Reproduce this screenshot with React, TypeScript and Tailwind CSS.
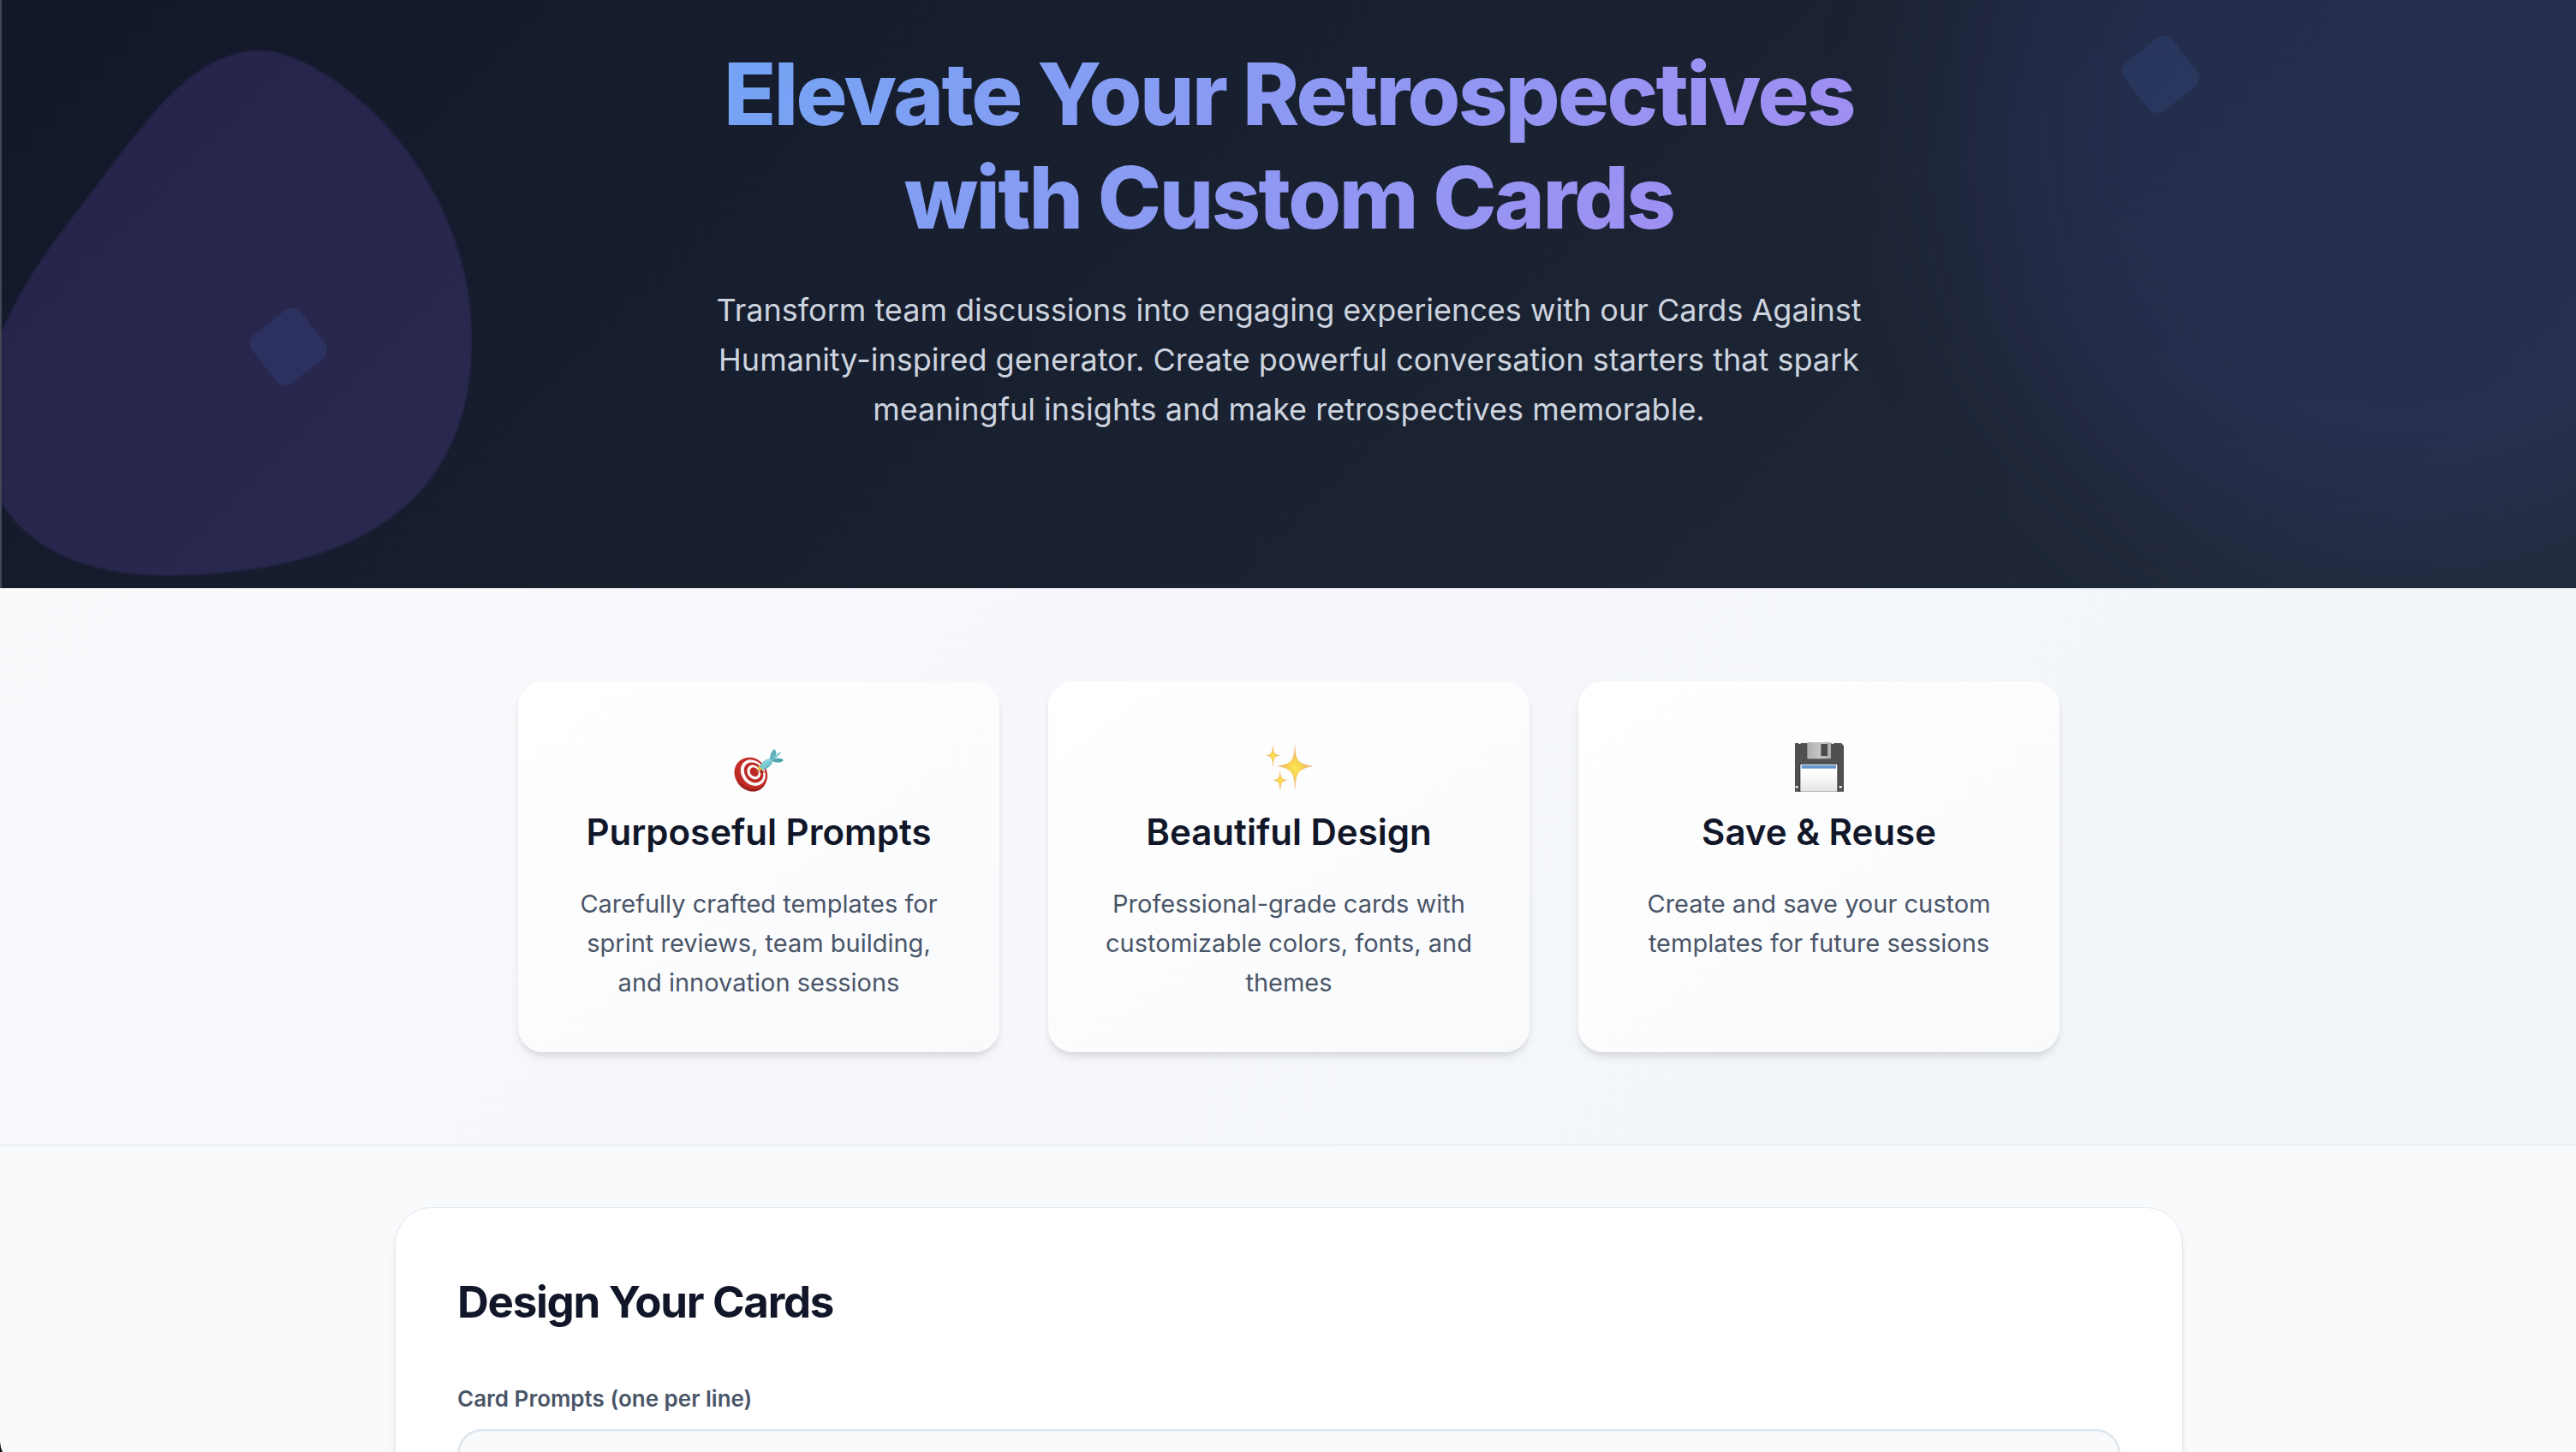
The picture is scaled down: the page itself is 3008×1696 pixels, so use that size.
import type { ReactNode } from "react";

function TargetIcon() {
  return (
    <svg viewBox="78 48 180 180" className="size-[60px]" aria-hidden="true">
      <defs>
        <linearGradient id="rim" x1="0" y1="0" x2="0" y2="1">
          <stop offset="0" stopColor="#c8332a" />
          <stop offset="1" stopColor="#8f1715" />
        </linearGradient>
        <linearGradient id="flight" x1="0" y1="0" x2="1" y2="1">
          <stop offset="0" stopColor="#4f9fac" />
          <stop offset="0.5" stopColor="#7ecfd8" />
          <stop offset="1" stopColor="#3c93a0" />
        </linearGradient>
      </defs>
      <ellipse cx="139" cy="165" rx="53" ry="62" transform="rotate(-38 139 165)" fill="url(#rim)" />
      <ellipse cx="145" cy="160" rx="50" ry="59" transform="rotate(-38 145 160)" fill="#c22a25" />
      <ellipse cx="148" cy="158" rx="40" ry="49" transform="rotate(-38 148 158)" fill="#fbf7f6" />
      <ellipse cx="150" cy="157" rx="31" ry="38" transform="rotate(-38 150 157)" fill="#bb2823" />
      <ellipse cx="151" cy="156" rx="22" ry="27" transform="rotate(-38 151 156)" fill="#fbf7f6" />
      <ellipse cx="152" cy="155" rx="14" ry="17" transform="rotate(-38 152 155)" fill="#bb2823" />
      <path d="M166 152 L184 150 L190 158 L176 160 Z" fill="#8f1715" opacity="0.6" />
      <path d="M152 157 L172 141 L175 145 Z" fill="#b78a2b" />
      <path d="M165 148 L168 131 L186 148 Z" fill="#e6c02d" />
      <path d="M172 133 C178 121 190 112 208 107 L217 117 C213 130 202 143 184 147 C177 146 172 140 172 133 Z" fill="url(#flight)" />
      <path d="M178 131 C186 122 196 116 208 112" fill="none" stroke="#b4eaef" strokeWidth="3" />
      <path d="M207 110 C207 94 212 82 222 75 C231 82 231 94 226 106 L215 114 Z" fill="#5eb0bb" />
      <path d="M216 112 C222 101 231 91 244 84 L246 88 C240 96 232 104 222 114 Z" fill="#84ccd4" />
      <path d="M215 114 C228 106 243 105 255 113 C249 122 232 125 217 118 Z" fill="#4ba2af" />
    </svg>
  );
}

function SparklesIcon() {
  return (
    <svg viewBox="75 48 180 180" className="size-[60px]" aria-hidden="true">
      <defs>
        <radialGradient id="spark">
          <stop offset="0" stopColor="#fbe653" />
          <stop offset="0.4" stopColor="#f5d150" />
          <stop offset="1" stopColor="#eda879" />
        </radialGradient>
      </defs>
      <g fill="url(#spark)" stroke="#efb070" strokeWidth="1" strokeLinejoin="round">
        <path d="M186 64 C189 112 195 127 248 135 C195 144 189 160 187 217 C184 160 178 144 125 135 C178 127 183 112 186 64 Z" />
        <path d="M109 62 C111 87 114 93 133 97 C114 101 111 108 110 134 C107 108 104 101 86 97 C104 93 107 87 109 62 Z" />
        <path d="M134 152 C136 174 140 181 158 184 C140 188 137 194 135 219 C132 194 129 188 111 184 C129 181 132 174 134 152 Z" />
      </g>
    </svg>
  );
}

function FloppyIcon() {
  return (
    <svg viewBox="72 48 180 180" className="size-[60px]" aria-hidden="true">
      <defs>
        <linearGradient id="paper" x1="0" y1="0" x2="0" y2="1">
          <stop offset="0.3" stopColor="#ffffff" />
          <stop offset="1" stopColor="#e4e4e4" />
        </linearGradient>
        <linearGradient id="shutter" x1="0" y1="0" x2="1" y2="0">
          <stop offset="0" stopColor="#adafb1" />
          <stop offset="0.5" stopColor="#c3c5c6" />
          <stop offset="1" stopColor="#a9abac" />
        </linearGradient>
      </defs>
      <path d="M78 54 H91 V57 H98 V54 H206 V57 H213 V54 H240 L249 63 V224 H78 Z" fill="#505050" />
      <path d="M92 57 V108" stroke="#444" strokeWidth="2" />
      <rect x="121" y="51" width="83" height="58" rx="3" fill="url(#shutter)" />
      <rect x="169" y="57" width="23" height="42" rx="1" fill="#4b4b4b" />
      <path d="M93 224 V131 Q93 125 99 125 H224 Q229 125 229 131 V224 Z" fill="#3d3d3d" />
      <path d="M97 224 V131 Q97 128 101 128 H222 Q226 128 226 131 V224 Z" fill="url(#paper)" />
      <rect x="101" y="131" width="121" height="12" fill="#6596cd" />
      <rect x="80" y="204" width="9" height="7" fill="#f4f4f4" />
      <rect x="233" y="204" width="9" height="7" fill="#f4f4f4" />
    </svg>
  );
}

type Feature = { icon: ReactNode; title: string; text: string };

const features: Feature[] = [
  {
    icon: <TargetIcon />,
    title: "Purposeful Prompts",
    text: "Carefully crafted templates for sprint reviews, team building, and innovation sessions",
  },
  {
    icon: <SparklesIcon />,
    title: "Beautiful Design",
    text: "Professional-grade cards with customizable colors, fonts, and themes",
  },
  {
    icon: <FloppyIcon />,
    title: "Save & Reuse",
    text: "Create and save your custom templates for future sessions",
  },
];

function Hero() {
  return (
    <header className="relative overflow-hidden border-l-2 border-white/20 bg-linear-135 from-[#121829] to-[#212a39] bg-origin-border px-9 pt-[49px] pb-[180px] text-center">
      <div className="absolute -top-[360px] -right-[292px] h-[1020px] w-[1000px] rounded-full bg-[#5b68ee]/13 blur-[90px]" />
      <svg className="absolute top-0 left-0 h-[687px] w-[600px] blur-[1px]" viewBox="0 0 600 687" aria-hidden="true">
        <path
          d="M302 59 C378 59 549 195 549 397 C549 640 328 672 190 672 C88 672 -22 630 -22 500 C-22 400 28 324 87 248 C163 150 218 59 302 59 Z"
          fill="#8b5cf6"
          fillOpacity="0.17"
        />
      </svg>
      <div className="absolute top-[369px] left-[299px] size-[72px] rotate-[52deg] rounded-[14px] bg-[#4a82e8]/12" />
      <div className="absolute top-[51px] right-[449px] size-[72px] rotate-[52deg] rounded-[14px] bg-[#4a82e8]/12" />
      <div className="relative mx-auto max-w-[1440px]">
        <h1 className="bg-linear-135 from-[#70a5f5] to-[#a58bf1] bg-clip-text text-[100px] leading-[121px] font-extrabold tracking-tight text-transparent">
          Elevate Your Retrospectives with Custom Cards
        </h1>
        <p className="mt-[42px] text-[36px] leading-[58px] text-[#cdd4df]">
          Transform team discussions into engaging experiences with our Cards Against Humanity-inspired generator.
          Create powerful conversation starters that spark meaningful insights and make retrospectives memorable.
        </p>
      </div>
    </header>
  );
}

function Features() {
  return (
    <section className="border-b border-[#e2e8f0] bg-linear-135 from-[#f9fafc] to-[#f1f4f9] pt-[109px] pb-[108px] pl-0.5">
      <div className="mx-auto grid max-w-[1800px] grid-cols-3 gap-[57px]">
        {features.map((feature) => (
          <article
            key={feature.title}
            className="rounded-[29px] bg-linear-145 from-white to-[#f9fafc] p-[58px] text-center shadow-[0_7px_11px_-2px_rgba(0,0,0,0.1),0_4px_7px_-2px_rgba(0,0,0,0.06)]"
          >
            <div className="flex h-[92px] justify-center pt-3">{feature.icon}</div>
            <h3 className="text-[42px] leading-[52px] font-semibold whitespace-nowrap text-[#111729]">{feature.title}</h3>
            <p className="mt-[35px] text-[29px] leading-[46px] text-[#4a5568]">{feature.text}</p>
          </article>
        ))}
      </div>
    </section>
  );
}

function Designer() {
  return (
    <main className="py-[72px] pl-0.5">
      <section className="mx-auto max-w-[2088px] rounded-[43px] border border-[#e2e8f0] bg-white p-[72px] shadow-[0_7px_11px_-2px_rgba(0,0,0,0.08),0_4px_7px_-2px_rgba(0,0,0,0.05)]">
        <h2 className="text-[51px] leading-[75px] font-bold tracking-tight text-[#111729]">Design Your Cards</h2>
        <label htmlFor="prompts" className="mt-14 block text-[26px] leading-10 font-semibold text-[#4a5568]">
          Card Prompts (one per line)
        </label>
        <textarea
          id="prompts"
          rows={8}
          className="mt-[15px] block w-full resize-none rounded-[29px] border-3 border-[#e2e8f0] bg-[#f9fafc] p-7 text-[29px] leading-[46px] text-[#111729] outline-none"
        />
      </section>
    </main>
  );
}

export default function App() {
  return (
    <div className="relative h-screen overflow-hidden bg-[#f9fafc] font-['Inter',sans-serif]">
      <Hero />
      <Features />
      <Designer />
      <svg className="absolute bottom-0 left-0 h-3 w-[3px]" viewBox="0 0 3 12" aria-hidden="true">
        <path d="M0 0 Q0.5 7 3 12 H0 Z" fill="#111" />
      </svg>
    </div>
  );
}
